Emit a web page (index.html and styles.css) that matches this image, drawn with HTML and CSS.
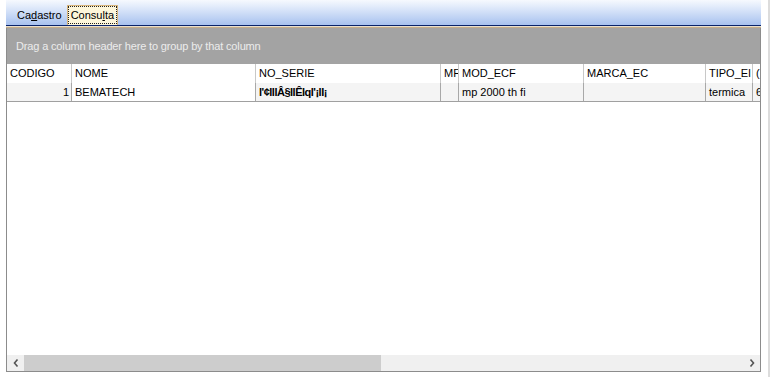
FILE: index.html
```html
<!DOCTYPE html>
<html lang="pt">
<head>
  <meta charset="UTF-8">
  <title>Consulta</title>
  <link rel="stylesheet" href="styles.css">
</head>
<body>

  <div class="frame">
    <div class="main">

      <!-- Tab strip -->
      <div class="tabbar">
        <div class="tab">Ca<u>d</u>astro</div>
        <div class="tab active"><span class="focus">Consu<u>l</u>ta</span></div>
      </div>
      <div class="tabline"></div>

      <!-- Grid -->
      <div class="grid">
        <div class="group-panel">Drag a column header here to group by that column</div>

        <div class="row head">
          <div class="cell">CODIGO</div>
          <div class="cell">NOME</div>
          <div class="cell">NO_SERIE</div>
          <div class="cell">MF</div>
          <div class="cell">MOD_ECF</div>
          <div class="cell">MARCA_EC</div>
          <div class="cell">TIPO_EI</div>
          <div class="cell">(</div>
        </div>

        <div class="row data">
          <div class="cell num">1</div>
          <div class="cell current">BEMATECH</div>
          <div class="cell junk">l'¢lllÂ§llÊlql'¡lI¡</div>
          <div class="cell"></div>
          <div class="cell">mp 2000 th fi</div>
          <div class="cell"></div>
          <div class="cell">termica</div>
          <div class="cell">6</div>
        </div>

        <div class="empty"></div>

        <div class="hscroll">
          <div class="arrow">
            <svg width="6" height="8" viewBox="0 0 6 8"><polyline points="4.5,0.5 1.5,4 4.5,7.5" fill="none" stroke="#555" stroke-width="1.6"/></svg>
          </div>
          <div class="thumb"></div>
          <div class="track"></div>
          <div class="arrow">
            <svg width="6" height="8" viewBox="0 0 6 8"><polyline points="1.5,0.5 4.5,4 1.5,7.5" fill="none" stroke="#555" stroke-width="1.6"/></svg>
          </div>
        </div>
      </div>

    </div>
    <div class="edge"></div>
  </div>

</body>
</html>
```

FILE: styles.css
```css
body {
  margin: 0;
  padding: 0;
  background: #fff;
  font-family: "Liberation Sans", Arial, sans-serif;
  font-size: 11px;
  color: #000;
  overflow: hidden;
}

.frame {
  display: flex;
  height: 377px;
}

.main {
  margin-left: 6px;
  width: 755px;
  display: flex;
  flex-direction: column;
}

.edge {
  margin-left: 7px;
  width: 2px;
  background: #dcdcdc;
}

/* Tab strip */
.tabbar {
  height: 25px;
  display: flex;
  align-items: flex-end;
  padding-left: 8px;
  background: linear-gradient(#f6f9fe 0%, #e3ecfb 25%, #a8c2ef 100%);
}

.tab {
  height: 19px;
  padding: 0 3px;
  line-height: 19px;
  margin-right: 2px;
}

.tab u {
  text-decoration: underline;
}

.tab.active {
  background: #fdf6da;
  border: 1px solid #d8b57a;
  border-bottom: none;
  padding: 1px 1px 0;
  height: 18px;
}

.focus {
  display: block;
  height: 16px;
  line-height: 16px;
  padding: 0 2px;
  outline: 1px dotted #222;
}

.tabline {
  height: 3px;
  border-top: 1px solid #0a246a;
  background: #e8e0d0;
  border-bottom: 1px solid #c4ac88;
  box-sizing: border-box;
}

/* Grid */
.grid {
  display: flex;
  flex-direction: column;
  border: 1px solid #8c8c8c;
  border-top: none;
  height: 344px;
  box-sizing: border-box;
  overflow: hidden;
}

.group-panel {
  height: 36px;
  line-height: 36px;
  padding-left: 9px;
  background: #a3a3a3;
  color: #ececec;
  letter-spacing: -0.15px;
}

.row {
  display: grid;
  grid-template-columns: 65px 184px 185px 18px 125px 122px 47px 8px;
  white-space: nowrap;
}

.row .cell {
  padding: 0 3px;
  overflow: hidden;
  border-right: 1px solid #c8c8c8;
}

.head {
  height: 19px;
  line-height: 19px;
  background: #fff;
}

.data {
  height: 19px;
  line-height: 18px;
  background: #f4f4f4;
  border-bottom: 1px solid #a0a0a0;
  box-sizing: border-box;
}

.data .cell {
  border-right-color: #a8a8a8;
}

.row .num {
  text-align: right;
  padding-right: 2px;
}

.current {
  background: #fff;
}

.junk {
  font-weight: bold;
  letter-spacing: -0.5px;
}

.empty {
  flex: 1;
  background: #fff;
}

/* Horizontal scrollbar */
.hscroll {
  height: 16px;
  display: flex;
  background: #f0f0f0;
}

.arrow {
  width: 17px;
  display: flex;
  align-items: center;
  justify-content: center;
}

.thumb {
  width: 357px;
  background: #cdcdcd;
}

.track {
  flex: 1;
}
```
